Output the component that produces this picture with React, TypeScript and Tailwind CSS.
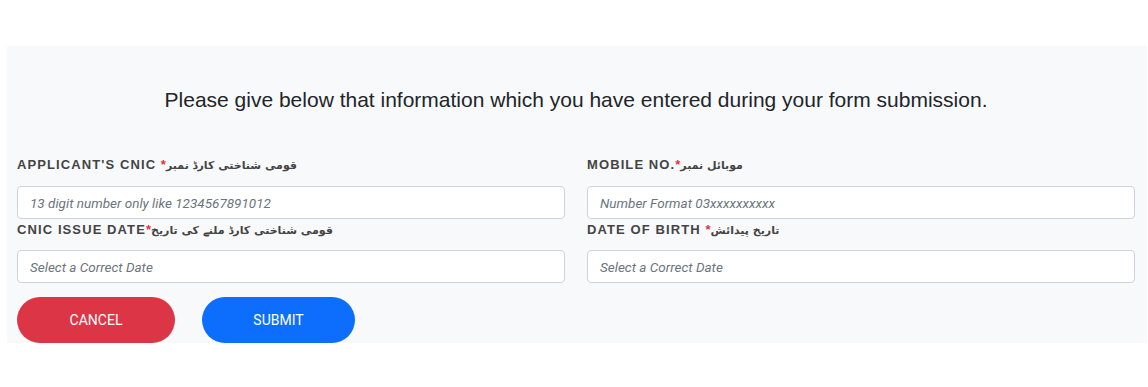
import React from "react";

const Label = ({ en, ur, space }: { en: string; ur: string; space?: boolean }) => (
  <div className="h-5 leading-5 whitespace-nowrap">
    <span className="text-[13px] font-bold tracking-[1.1px] text-[#444]">
      {en}
      {space ? "\u00a0" : ""}
    </span>
    <span className="text-[13px] font-bold text-[#dc3545]">*</span>
    <span dir="rtl" className="text-[11px] font-bold text-[#444] [font-family:'DejaVu_Sans',sans-serif]">
      {ur}
    </span>
  </div>
);

const Input = ({ ph }: { ph: string }) => (
  <input
    placeholder={ph}
    className="block w-full h-[33px] rounded-[4px] border border-[#ced4da] bg-white px-3 text-[13.5px] italic text-[#212529] placeholder:text-[#6c757d] outline-none [font-family:Roboto,sans-serif]"
  />
);

export default function App() {
  return (
    <div className="w-[1148px] h-[387px] bg-white pt-[46px] pl-[7px] [font-family:'Liberation_Sans',Arial,sans-serif]">
      <div className="w-[1140px] h-[297px] bg-[#f8f9fa] pl-[10px] pr-[12px] pt-[42px]">
        <h2 className="text-center text-[21px] leading-[24px] text-[#212529]">
          Please give below that information which you have entered during your form submission.
        </h2>
        <div className="mt-[42px] grid grid-cols-2 gap-x-[22px]">
          <div>
            <Label en="APPLICANT'S CNIC" ur="قومی شناختی کارڈ نمبر" space />
            <div className="mt-[12px]">
              <Input ph="13 digit number only like 1234567891012" />
            </div>
          </div>
          <div>
            <Label en="MOBILE NO." ur="موبائل نمبر" />
            <div className="mt-[12px]">
              <Input ph="Number Format 03xxxxxxxxxx" />
            </div>
          </div>
          <div>
            <Label en="CNIC ISSUE DATE" ur="قومی شناختی کارڈ ملنے کی تاریخ" />
            <div className="mt-[11px]">
              <Input ph="Select a Correct Date" />
            </div>
          </div>
          <div>
            <Label en="DATE OF BIRTH" ur="تاریخ پیدائش" space />
            <div className="mt-[11px]">
              <Input ph="Select a Correct Date" />
            </div>
          </div>
        </div>
        <div className="mt-[14px] flex gap-[27px]">
          <button className="w-[158px] h-[46px] rounded-full bg-[#dc3545] text-white text-[14px] [font-family:Roboto,sans-serif]">
            CANCEL
          </button>
          <button className="w-[153px] h-[46px] rounded-full bg-[#0d6efd] text-white text-[14px] [font-family:Roboto,sans-serif]">
            SUBMIT
          </button>
        </div>
      </div>
    </div>
  );
}
